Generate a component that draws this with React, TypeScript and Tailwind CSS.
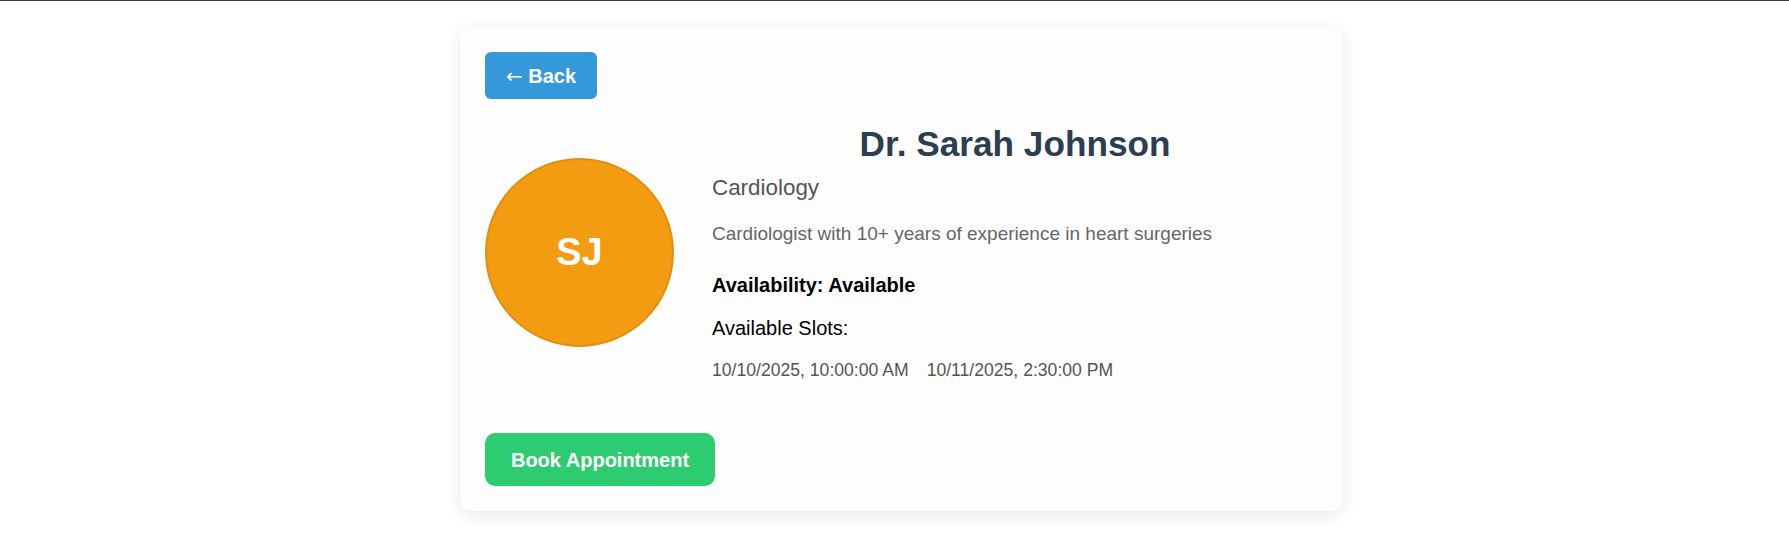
export default function App() {
  const slots = ['10/10/2025, 10:00:00 AM', '10/11/2025, 2:30:00 PM'];

  return (
    <div className="min-h-screen bg-white font-['Liberation_Sans',Arial,sans-serif]">
      <div className="h-px bg-[#3a3a3a]" />

      <div className="flex justify-center pl-[14px] pt-[25px]">
        <div className="w-[883px] rounded-xl bg-[#fdfdfd] px-[25px] pt-[26px] pb-[25px] shadow-[0_4px_16px_rgba(0,0,0,0.09)]">
          {/* back */}
          <button className="h-[47px] w-[112px] rounded-md bg-[#3498db] text-[20px] font-bold text-white">
            <span className="font-['DejaVu_Sans',sans-serif] font-normal">←</span> Back
          </button>

          {/* profile */}
          <div className="mt-[25px] flex items-center gap-[38px]">
            <div className="flex h-[189px] w-[189px] shrink-0 items-center justify-center rounded-full border-[2px] border-[#de900f] bg-[#f39c12]">
              <span className="text-[38px] font-bold text-white">SJ</span>
            </div>

            <div className="flex-1">
              <h1 className="text-center text-[35.2px] leading-[1.15] font-bold text-[#2c3e50]">Dr. Sarah Johnson</h1>
              <div className="mt-[11px] text-[22.4px] leading-[1.15] text-[#555]">Cardiology</div>
              <p className="mt-[22px] text-[19px] leading-[1.15] text-[#666]">
                Cardiologist with 10+ years of experience in heart surgeries
              </p>
              <p className="mt-[29px] text-[20px] leading-[1.15] font-bold text-black">Availability: Available</p>
              <p className="mt-[20px] text-[20px] leading-[1.15] text-black">Available Slots:</p>
              <div className="mt-[20px] flex gap-[18px] text-[17.6px] leading-[1.15] text-[#555]">
                {slots.map((s) => (
                  <span key={s}>{s}</span>
                ))}
              </div>
            </div>
          </div>

          {/* action */}
          <button className="mt-[53px] h-[53px] w-[230px] rounded-[10px] bg-[#2ecc71] text-[20px] font-bold text-white">
            Book Appointment
          </button>
        </div>
      </div>
    </div>
  );
}
